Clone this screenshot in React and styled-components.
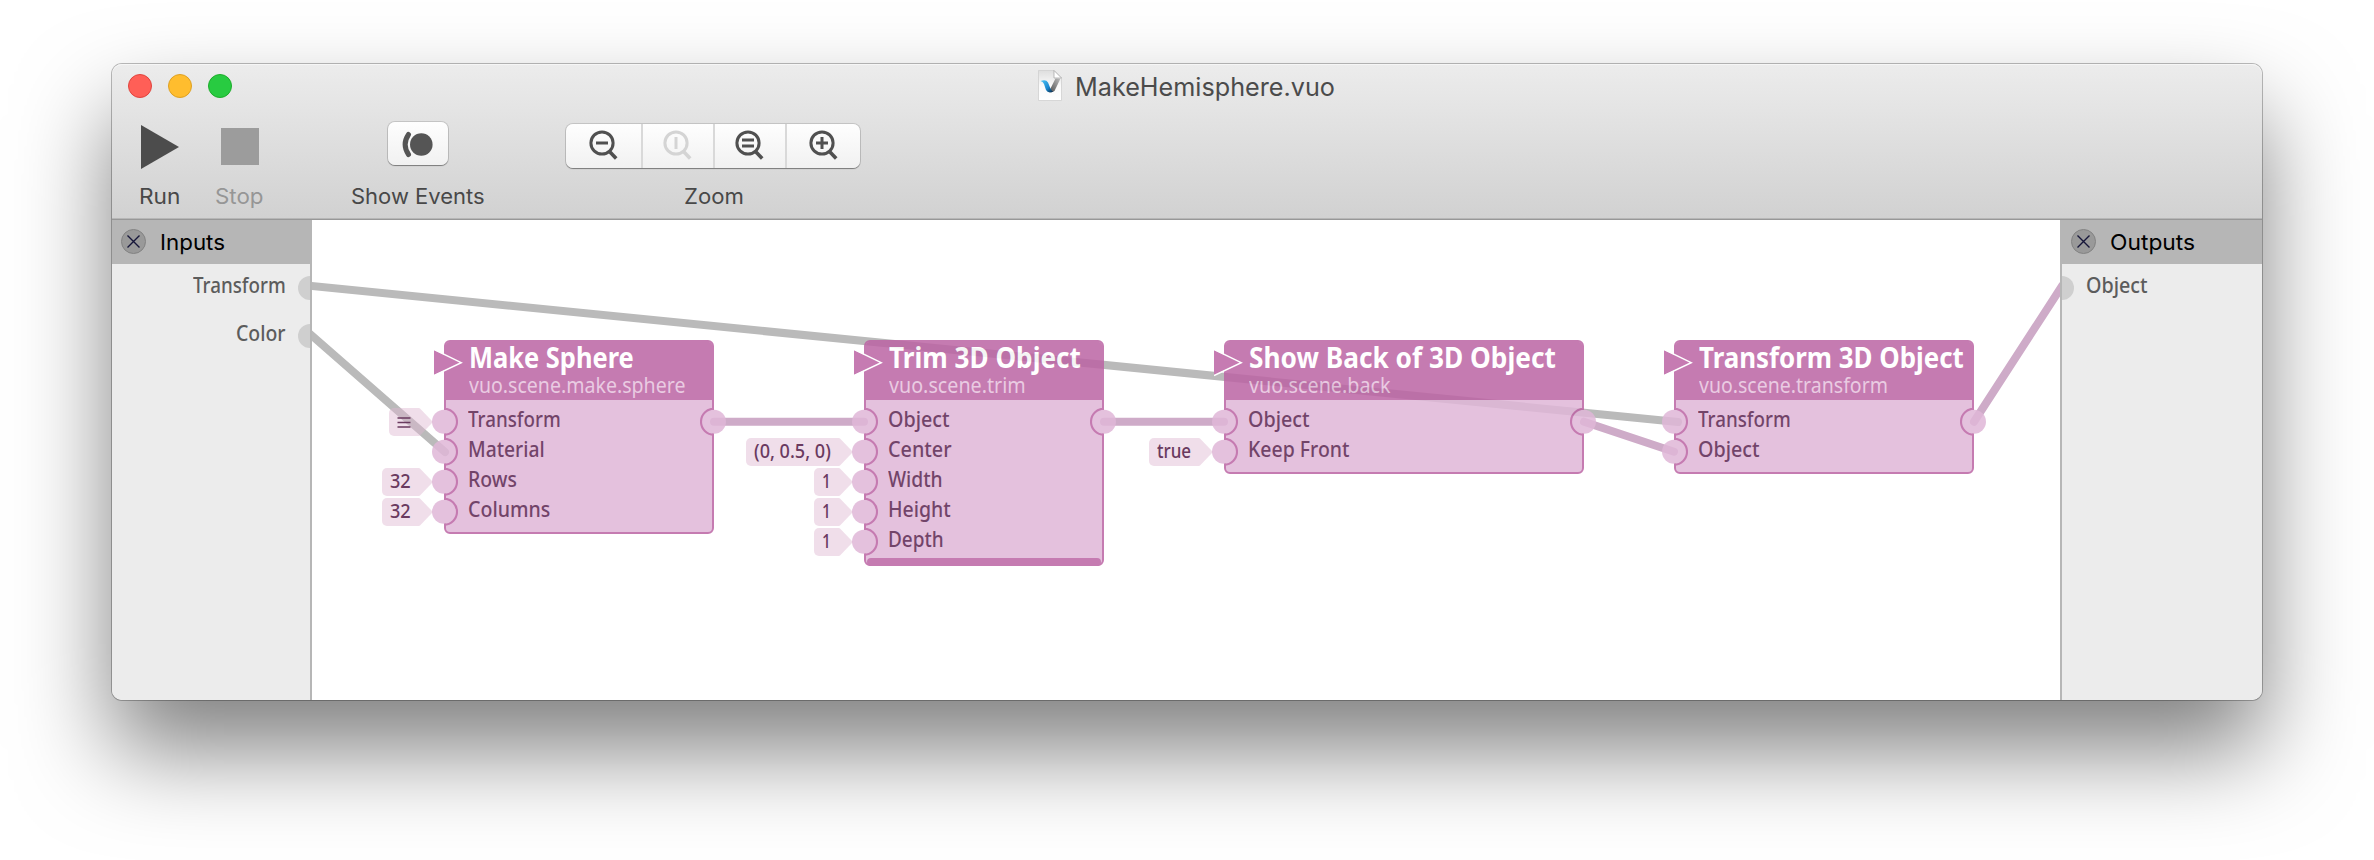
import React, { useLayoutEffect, useRef, useState } from "react";
import styled, { createGlobalStyle, css } from "styled-components";

const UI_FONT = `Inter, Roboto, "Liberation Sans", sans-serif`;
const NODE_FONT = `"Noto Sans", "Open Sans", sans-serif`;

const Global = createGlobalStyle`
  * { box-sizing: border-box; }
  html, body { margin: 0; background: #fff; }
  body { font-family: ${UI_FONT}; overflow: hidden; }
`;

/* ---------- text that is condensed to a given width ---------- */

const FitBox = styled.span`
  display: block;
  flex: none;
  width: ${(p) => p.$w}px;
  white-space: nowrap;
`;
const FitInner = styled.span`
  display: inline-block;
  transform-origin: 0 50%;
`;

function Fit({ w, children }) {
  const ref = useRef(null);
  const [scale, setScale] = useState(1);
  useLayoutEffect(() => {
    setScale(w / ref.current.offsetWidth);
  }, [w, children]);
  return (
    <FitBox $w={w}>
      <FitInner ref={ref} style={{ transform: `scaleX(${scale})` }}>
        {children}
      </FitInner>
    </FitBox>
  );
}

/* ---------- window ---------- */

const Stage = styled.main`
  width: 2374px;
  height: 860px;
  padding: 64px 112px 160px;
  background: #fff;
`;
const Window = styled.section`
  height: 636px;
  display: flex;
  flex-direction: column;
  border-radius: 10px;
  box-shadow: 0 0 0 1px rgba(0, 0, 0, 0.26), 0 50px 94px rgba(0, 0, 0, 0.5);
`;
const Chrome = styled.header`
  height: 156px;
  flex: none;
  border-radius: 10px 10px 0 0;
  border-bottom: 1px solid #979797;
  background: linear-gradient(#ececec, #d1d1d1);
  box-shadow: inset 0 1px 0 #f6f6f6, inset 0 -1px 0 #b6b6b6;
`;
const TitleBar = styled.div`
  height: 44px;
  display: grid;
  grid-template-columns: 1fr auto 1fr;
  align-items: center;
`;
const Lights = styled.div`
  display: flex;
  gap: 16px;
  padding-left: 16px;
`;
const Light = styled.i`
  width: 24px;
  height: 24px;
  border-radius: 50%;
  background: ${(p) => p.$fill};
  border: 1px solid ${(p) => p.$edge};
`;
const Title = styled.h1`
  margin: 0;
  padding-right: 2px;
  display: flex;
  align-items: center;
  gap: 13px;
  font-weight: 400;
  font-size: 25px;
  line-height: 30px;
  color: #4b4b4b;
  > svg { margin-top: -2px; }
  > span { padding-top: 1px; }
`;
const Tools = styled.div`
  display: flex;
  padding-left: 27px;
`;
const Tool = styled.div`
  display: flex;
  flex-direction: column;
  align-items: center;
  margin-left: ${(p) => p.$gap || 0}px;
  font-size: 21px;
  line-height: 24px;
  color: ${(p) => (p.$disabled ? "#969696" : "#484848")};
`;
const ToolFace = styled.div`
  height: 77px;
  display: flex;
  align-items: center;
  padding-bottom: ${(p) => p.$lift || 0}px;
`;
const buttonFace = css`
  background: linear-gradient(#fefefe, #f1f1f1);
  box-shadow: 0 0 0 1px rgba(0, 0, 0, 0.13), 0 1px 1px rgba(0, 0, 0, 0.35);
  border-radius: 7px;
`;
const EventsButton = styled.div`
  width: 60px;
  height: 43px;
  display: flex;
  align-items: center;
  justify-content: center;
  padding-right: 2px;
  ${buttonFace}
`;
const Segments = styled.div`
  display: flex;
  width: 294px;
  height: 44px;
  margin-right: 2px;
  ${buttonFace}
`;
const Segment = styled.div`
  width: ${(p) => p.$w}px;
  padding: 6px 0 0 ${(p) => p.$pad}px;
  border-right: ${(p) => (p.$last ? "none" : "2px solid #d9d9d9")};
  color: ${(p) => (p.$off ? "#d4d4d4" : "#505050")};
`;

const FileIcon = () => (
  <svg width="24" height="31" viewBox="0 0 24 31">
    <defs>
      <linearGradient id="paper" x1="0" y1="0" x2="0" y2="1">
        <stop offset="0" stopColor="#dedede" />
        <stop offset="0.5" stopColor="#fafafa" />
        <stop offset="1" stopColor="#fff" />
      </linearGradient>
      <linearGradient id="blue" x1="0" y1="0" x2="1" y2="1">
        <stop offset="0" stopColor="#4cc4f5" />
        <stop offset="0.6" stopColor="#1886cf" />
        <stop offset="1" stopColor="#0a2138" />
      </linearGradient>
      <linearGradient id="steel" x1="1" y1="0" x2="0" y2="1">
        <stop offset="0" stopColor="#bdbdbd" />
        <stop offset="1" stopColor="#555" />
      </linearGradient>
    </defs>
    <path d="M0.500 0.500H16L23.500 8V30.500H0.500Z" fill="url(#paper)" stroke="#cfcfcf" strokeWidth="0.800" />
    <path d="M16 0.500V8H23.500Z" fill="#fff" stroke="#a9a9a9" strokeWidth="0.800" />
    <path d="M17.500 8.500H22.500L16.500 21Q14.500 22.500 12 22L12.500 18.500Z" fill="url(#steel)" />
    <path d="M2.500 11Q8 9 10 12.500L12.500 18.500Q13.500 21 15.500 21.500Q10 24 8 20L6 14Q5 11.500 2.500 11Z" fill="url(#blue)" />
  </svg>
);
const PlayIcon = () => (
  <svg width="38" height="44" viewBox="0 0 38 44">
    <path d="M0 0L38 22L0 44Z" fill="#4c4c4c" />
  </svg>
);
const StopIcon = styled.i`
  width: 38px;
  height: 37px;
  background: #9c9c9c;
`;
const EventsIcon = () => (
  <svg width="32" height="28" viewBox="0 0 32 28">
    <circle cx="20.300" cy="14.500" r="11.300" fill="#555" />
    <path d="M7.500 4.500Q0.800 14.500 7.500 24.500" fill="none" stroke="#555" strokeWidth="5" strokeLinecap="round" />
  </svg>
);
const GLYPHS = {
  out: "M7 13H19",
  actual: "M13 7V19",
  fit: "M7 10H19M7 16H19",
  in: "M7 13H19M13 7V19",
};
const Magnifier = ({ kind }) => (
  <svg width="30" height="32" viewBox="0 0 30 32" fill="none" stroke="currentColor" strokeWidth="3">
    <circle cx="13" cy="13" r="11.100" />
    <path d="M20.500 21.500L27.200 28.500" strokeWidth="3.600" />
    <path d={GLYPHS[kind]} />
  </svg>
);

/* ---------- body ---------- */

const Body = styled.div`
  flex: 1;
  display: flex;
  min-height: 0;
  border-radius: 0 0 10px 10px;
  overflow: hidden;
`;
const Side = styled.aside`
  width: ${(p) => (p.$right ? 202 : 200)}px;
  flex: none;
  background: #ececec;
  border: 0 solid #b6b6b6;
  border-width: ${(p) => (p.$right ? "0 0 0 2px" : "0 2px 0 0")};
`;
const SideHead = styled.div`
  height: 44px;
  margin: ${(p) => (p.$right ? "0" : "0 -2px 0 0")};
  padding: 0 0 2px 9px;
  display: flex;
  align-items: center;
  gap: 14px;
  background: #b6b6b6;
  color: #000;
  font-size: 22px;
  line-height: 28px;
  > span { padding-top: 2px; }
`;
const SideRow = styled.div`
  height: 48px;
  display: flex;
  align-items: center;
  flex-direction: ${(p) => (p.$right ? "row-reverse" : "row")};
  justify-content: flex-end;
  gap: 12px;
  font-family: ${NODE_FONT};
  font-size: 21px;
  font-weight: 500;
  line-height: 30px;
  color: #5c5c5c;
  > span { margin-top: -6px; }
`;
const HalfPort = styled.i`
  width: 12px;
  height: 24px;
  background: #cfcfcf;
  border-radius: ${(p) => (p.$right ? "0 12px 12px 0" : "12px 0 0 12px")};
`;
const CloseIcon = () => (
  <svg width="25" height="25" viewBox="0 0 25 25">
    <circle cx="12.500" cy="12.500" r="12" fill="#999" stroke="#828282" />
    <path d="M6.500 6.500L18.500 18.500M18.500 6.500L6.500 18.500" stroke="#16163a" strokeWidth="1.400" />
  </svg>
);

/* ---------- canvas ---------- */

const Canvas = styled.div`
  position: relative;
  flex: 1;
  background: #fff;
  overflow: hidden;
`;
const Cables = styled.svg`
  position: absolute;
  inset: 0;
`;
const NodeWrap = styled.article`
  position: absolute;
  left: ${(p) => p.$x}px;
  top: 120px;
  width: ${(p) => p.$w}px;
`;
const NodeFrame = styled.div`
  border: 2px solid #bc64a4;
  border-radius: 6px;
  background: #e0b7d8;
  opacity: 0.85;
  font-family: ${NODE_FONT};
`;
const NodeHead = styled.div`
  height: 58px;
  padding-left: 23px;
  background: #bc64a4;
  border-radius: 3px 3px 0 0;
`;
const NodeTitle = styled.h2`
  margin: 0;
  height: 30px;
  font-size: 29px;
  line-height: 29px;
  font-weight: 700;
  color: #fff;
`;
const NodeClass = styled.div`
  font-size: 22px;
  line-height: 24px;
  color: #e6c2de;
`;
const Rows = styled.div`
  padding: 7px 0 ${(p) => (p.$strip ? 1 : 5)}px;
`;
const Row = styled.div`
  position: relative;
  height: 30px;
  padding: 0 0 6px 22px;
  display: flex;
  align-items: center;
  font-size: 21px;
  line-height: 24px;
  font-weight: 500;
  color: #5a2450;
`;
const Strip = styled.div`
  height: 8px;
  margin: 0 1px -2px;
  border-radius: 4px;
  background: #bc64a4;
`;
const PortSvg = styled.svg`
  position: absolute;
  top: 1px;
  ${(p) => (p.$out ? "right: -16px; transform: scaleX(-1);" : "left: -16px;")}
`;
const Port = ({ out }) => (
  <PortSvg $out={out} width="28" height="28" viewBox="0 0 28 28">
    <circle cx="14" cy="13.700" r="12" fill="#e0b7d8" />
    <path d="M14 0.700A13 13 0 0 1 14 26.700" fill="none" stroke="#bc64a4" strokeWidth="2.100" />
  </PortSvg>
);
const TriggerSvg = styled.svg`
  position: absolute;
  left: -10px;
  top: 8px;
`;
const Trigger = () => (
  <TriggerSvg width="32" height="30" viewBox="0 0 32 30">
    <path d="M0 2L26.500 14.700L0 27Z" fill="#c67bb2" />
    <path d="M0 1.500L27.200 14.700L0 27.500" fill="none" stroke="#fff" strokeWidth="1.500" />
  </TriggerSvg>
);
const Tags = styled.div`
  position: absolute;
  right: 100%;
  top: 67px;
  margin-right: 11px;
  display: flex;
  flex-direction: column;
  align-items: flex-end;
`;
const TagSlot = styled.div`
  height: 30px;
  padding: 1px 0;
`;
const Tag = styled.div`
  position: relative;
  height: 28px;
  margin-right: 14px;
  padding: 0 8px 1px 8px;
  display: flex;
  align-items: center;
  border-radius: 5px 0 0 5px;
  background: rgba(222, 182, 208, 0.45);
  font-family: ${NODE_FONT};
  font-size: 19px;
  line-height: 27px;
  font-weight: 500;
  color: #6a3a5f;
  &::after {
    content: "";
    position: absolute;
    left: 100%;
    top: 0;
    width: 14px;
    height: 28px;
    background: inherit;
    clip-path: polygon(0 0, 1px 0.5px, 100% 50%, 1px 27.5px, 0 100%);
  }
`;
const ListIcon = () => (
  <svg width="14" height="12" viewBox="0 0 14 12">
    <path d="M0.500 2H13.500M0.500 6.500H13.500M0.500 11H13.500" stroke="#6a3a5f" strokeWidth="1.500" />
  </svg>
);

const NODES = [
  {
    x: 132, w: 270, title: ["Make Sphere", 165], cls: ["vuo.scene.make.sphere", 216],
    rows: [["Transform", 93, "list"], ["Material", 77], ["Rows", 49, ["32", 21]], ["Columns", 82, ["32", 21]]],
  },
  {
    x: 552, w: 240, title: ["Trim 3D Object", 192], cls: ["vuo.scene.trim", 137], strip: true,
    rows: [["Object", 62], ["Center", 64, ["(0, 0.5, 0)", 77]], ["Width", 55, ["1", 9]], ["Height", 63, ["1", 9]], ["Depth", 56, ["1", 9]]],
  },
  {
    x: 912, w: 360, title: ["Show Back of 3D Object", 307], cls: ["vuo.scene.back", 142],
    rows: [["Object", 62], ["Keep Front", 101, ["true", 34]]],
  },
  {
    x: 1362, w: 300, title: ["Transform 3D Object", 265], cls: ["vuo.scene.transform", 189],
    rows: [["Transform", 93], ["Object", 62]],
  },
];

const CABLES = [
  { d: "M-4 65.700L1366 202", c: "#bababa" },
  { d: "M-2 114L133 232", c: "#bababa" },
  { d: "M402 201.700H552", c: "#ceabc8" },
  { d: "M792 201.700H912", c: "#ceabc8" },
  { d: "M1272 201.700L1362 231.700", c: "#ceabc8" },
  { d: "M1662 201.700L1750 66", c: "#ceabc8" },
];

function Node({ node }) {
  return (
    <NodeWrap $x={node.x} $w={node.w}>
      <NodeFrame>
        <NodeHead>
          <NodeTitle><Fit w={node.title[1]}>{node.title[0]}</Fit></NodeTitle>
          <NodeClass><Fit w={node.cls[1]}>{node.cls[0]}</Fit></NodeClass>
        </NodeHead>
        <Rows $strip={node.strip}>
          {node.rows.map(([label, w], i) => (
            <Row key={label}>
              <Port />
              <Fit w={w}>{label}</Fit>
              {i === 0 && <Port out />}
            </Row>
          ))}
        </Rows>
        {node.strip && <Strip />}
      </NodeFrame>
      <Trigger />
      <Tags>
        {node.rows.map(([label, , tag]) => (
          <TagSlot key={label}>
            {tag && <Tag>{tag === "list" ? <ListIcon /> : <Fit w={tag[1]}>{tag[0]}</Fit>}</Tag>}
          </TagSlot>
        ))}
      </Tags>
    </NodeWrap>
  );
}

export default function App() {
  return (
    <>
      <Global />
      <Stage>
        <Window>
          <Chrome>
            <TitleBar>
              <Lights>
                <Light $fill="#ff5f57" $edge="#e0443e" />
                <Light $fill="#ffbd2e" $edge="#dea123" />
                <Light $fill="#28cb41" $edge="#1dad2b" />
              </Lights>
              <Title>
                <FileIcon />
                <Fit w={260}>MakeHemisphere.vuo</Fit>
              </Title>
            </TitleBar>
            <Tools>
              <Tool>
                <ToolFace><PlayIcon /></ToolFace>
                <Fit w={41}>Run</Fit>
              </Tool>
              <Tool $gap={35} $disabled>
                <ToolFace><StopIcon /></ToolFace>
                <Fit w={49}>Stop</Fit>
              </Tool>
              <Tool $gap={87}>
                <ToolFace $lift={6}><EventsButton><EventsIcon /></EventsButton></ToolFace>
                <Fit w={134}>Show Events</Fit>
              </Tool>
              <Tool $gap={81}>
                <ToolFace $lift={1}>
                  <Segments>
                    <Segment $w={77} $pad={23}><Magnifier kind="out" /></Segment>
                    <Segment $w={72} $pad={20} $off><Magnifier kind="actual" /></Segment>
                    <Segment $w={72} $pad={20}><Magnifier kind="fit" /></Segment>
                    <Segment $w={73} $pad={22} $last><Magnifier kind="in" /></Segment>
                  </Segments>
                </ToolFace>
                <Fit w={60}>Zoom</Fit>
              </Tool>
            </Tools>
          </Chrome>
          <Body>
            <Side>
              <SideHead><CloseIcon /><Fit w={65}>Inputs</Fit></SideHead>
              <SideRow><Fit w={93}>Transform</Fit><HalfPort /></SideRow>
              <SideRow><Fit w={50}>Color</Fit><HalfPort /></SideRow>
            </Side>
            <Canvas>
              <Cables width="1748" height="480" fill="none" strokeWidth="8" strokeLinecap="round">
                {CABLES.map((cable) => (
                  <path key={cable.d} d={cable.d} stroke={cable.c} />
                ))}
              </Cables>
              {NODES.map((node) => (
                <Node key={node.x} node={node} />
              ))}
            </Canvas>
            <Side $right>
              <SideHead $right><CloseIcon /><Fit w={85}>Outputs</Fit></SideHead>
              <SideRow $right><Fit w={62}>Object</Fit><HalfPort $right /></SideRow>
            </Side>
          </Body>
        </Window>
      </Stage>
    </>
  );
}
